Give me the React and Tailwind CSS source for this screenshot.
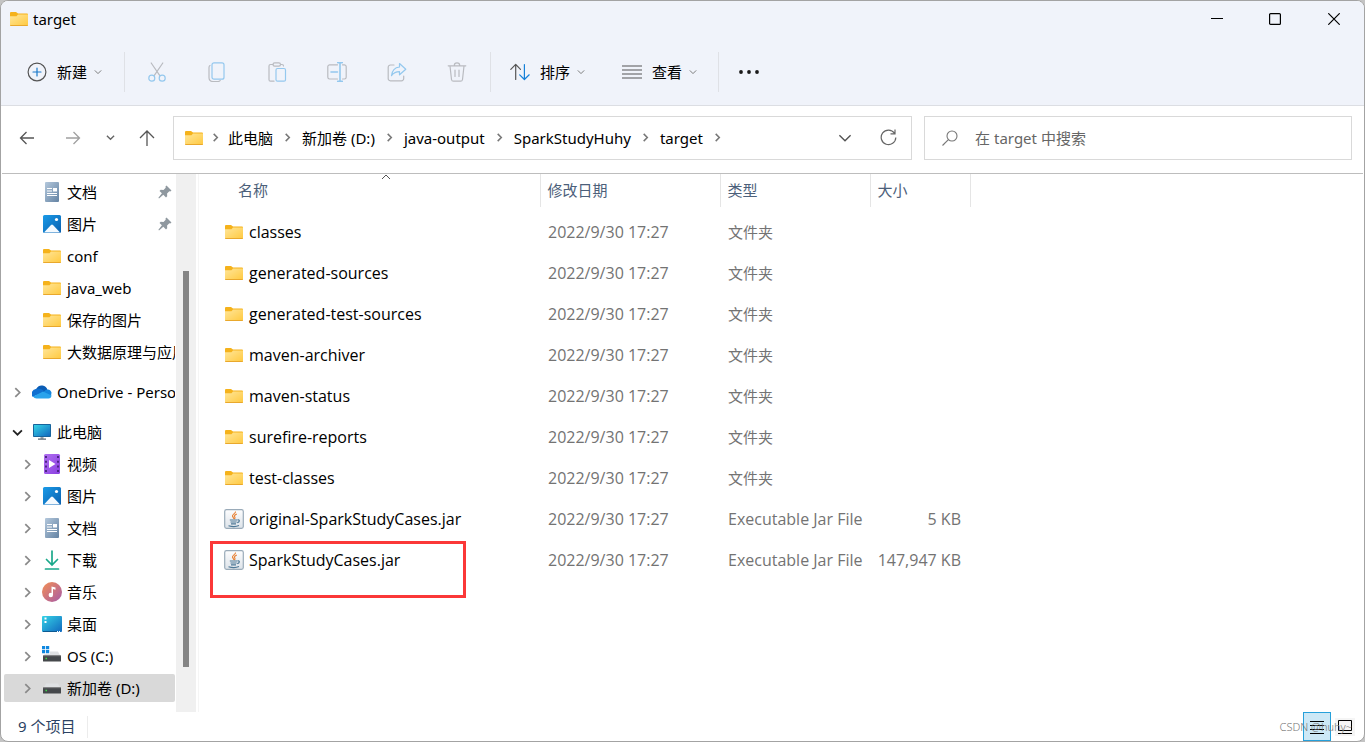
import { useState } from 'react';

const FILES = [
  { name: 'classes', date: '2022/9/30 17:27', type: '文件夹', size: '' },
  { name: 'generated-sources', date: '2022/9/30 17:27', type: '文件夹', size: '' },
  { name: 'generated-test-sources', date: '2022/9/30 17:27', type: '文件夹', size: '' },
  { name: 'maven-archiver', date: '2022/9/30 17:27', type: '文件夹', size: '' },
  { name: 'maven-status', date: '2022/9/30 17:27', type: '文件夹', size: '' },
  { name: 'surefire-reports', date: '2022/9/30 17:27', type: '文件夹', size: '' },
  { name: 'test-classes', date: '2022/9/30 17:27', type: '文件夹', size: '' },
  { name: 'original-SparkStudyCases.jar', date: '2022/9/30 17:27', type: 'Executable Jar File', size: '5 KB', jar: true },
  { name: 'SparkStudyCases.jar', date: '2022/9/30 17:27', type: 'Executable Jar File', size: '147,947 KB', jar: true, marked: true },
];

/* ---------- line icons ---------- */

function Chevron({ dir = 'down', size = 8, className = 'text-[#777]', width = 1.2 }) {
  const d = {
    down: 'M1 3l4 4 4-4',
    up: 'M1 7l4-4 4 4',
    right: 'M3 1l4 4-4 4',
  }[dir];
  return (
    <svg width={size} height={size} viewBox="0 0 10 10" fill="none" stroke="currentColor" strokeWidth={width} className={`shrink-0 ${className}`}>
      <path d={d} />
    </svg>
  );
}

function Icon({ size = 20, children, stroke = '#555' }) {
  return (
    <svg width={size} height={size} viewBox="0 0 20 20" fill="none" stroke={stroke} strokeWidth="1.2" strokeLinecap="round" strokeLinejoin="round" className="shrink-0">
      {children}
    </svg>
  );
}

const GREY = '#b9bbc0';
const BLUE = '#94c8ee';

const NewIcon = () => (
  <Icon>
    <circle cx="10" cy="10" r="8.9" />
    <path d="M10 6v8M6 10h8" stroke="#1979ca" />
  </Icon>
);

const CutIcon = () => (
  <Icon stroke={GREY}>
    <path d="M4.2 1L13 13.8M15.8 1L7 13.8" />
    <circle cx="4.8" cy="16.2" r="3" stroke={BLUE} />
    <circle cx="15.2" cy="16.2" r="3" stroke={BLUE} />
  </Icon>
);

const CopyIcon = () => (
  <Icon stroke={GREY}>
    <path d="M3 3.5c-.9.5-1 1.2-1 2v10c0 2.500 1.400 4 4 4h5c1 0 1.800-.4 2.200-1" />
    <rect x="5" y=".8" width="12" height="16.400" rx="2" stroke={BLUE} />
  </Icon>
);

const PasteIcon = () => (
  <Icon stroke={GREY}>
    <path d="M6 2.500H3.500a1.500 1.500 0 0 0-1.500 1.500v13.700a1.500 1.500 0 0 0 1.500 1.500H7M13.500 2.500H15a1.500 1.500 0 0 1 1.500 1.500" />
    <rect x="6" y=".8" width="7.500" height="3.400" rx="1.600" />
    <rect x="9" y="6.500" width="9.500" height="12.700" rx="1.500" stroke={BLUE} />
  </Icon>
);

const RenameIcon = () => (
  <Icon stroke={GREY}>
    <path d="M10.500 2.800H2.500A1.800 1.800 0 0 0 .8 4.500v10.800a1.800 1.800 0 0 0 1.700 1.700h8M15.500 2.800h2a1.800 1.800 0 0 1 1.700 1.700v10.800a1.800 1.800 0 0 1-1.700 1.700h-2" />
    <path d="M10.700.6h4.600M10.700 19.400h4.600M13 .6v18.800M4 10h6.500" stroke={BLUE} strokeWidth="1.600" />
  </Icon>
);

const ShareIcon = () => (
  <Icon stroke={GREY}>
    <path d="M7 3H3.500a2.200 2.200 0 0 0-2.300 2.200v11.300a2.200 2.200 0 0 0 2.300 2.300h11a2.200 2.200 0 0 0 2.200-2.300V14" />
    <path d="M12.500 1.500l6.300 5.700-6.300 5.600V9.700c-3.500 0-5.800 1-8 4 .5-4.700 3-8.200 8-8.700z" stroke={BLUE} />
  </Icon>
);

const TrashIcon = () => (
  <Icon stroke={GREY}>
    <path d="M1.200 3.800h17.600M7.300 3.500a2.700 2.700 0 0 1 5.400 0M3 4l1.500 13.500a2 2 0 0 0 2 1.700h7a2 2 0 0 0 2-1.700L17 4M8 8v6.500M12 8v6.500" />
  </Icon>
);

const SortIcon = () => (
  <Icon>
    <path d="M5.700 17.500V2.500M.8 7.300l4.900-4.900 4.800 4.900" />
    <path d="M14.400 2.500v15M9.700 12.800l4.700 4.700 4.800-4.700" stroke="#1680d8" />
  </Icon>
);

const ViewIcon = () => (
  <Icon>
    <path d="M.5 4h19M.5 8h19M.5 12h19M.5 16h19" />
  </Icon>
);

const MoreIcon = () => (
  <svg width="20" height="20" viewBox="0 0 20 20" fill="#1a1a1a">
    <circle cx="2" cy="10" r="1.900" />
    <circle cx="10" cy="10" r="1.900" />
    <circle cx="18" cy="10" r="1.900" />
  </svg>
);

const ArrowIcon = ({ dir, stroke }) => (
  <svg width="16" height="16" viewBox="0 0 16 16" fill="none" stroke={stroke} strokeWidth="1.300" className="shrink-0">
    {dir === 'left' && <path d="M15 8H1.500M7.500 2L1.500 8l6 6" />}
    {dir === 'right' && <path d="M1 8h13.500M8.500 2l6 6-6 6" />}
    {dir === 'up' && <path d="M8 16V1M1 8l7-7 7 7" />}
  </svg>
);

/* ---------- coloured icons ---------- */

const FolderIcon = () => (
  <svg width="18" height="16" viewBox="0 0 18 16" className="shrink-0">
    <defs>
      <linearGradient id="folder" x1="0" y1="0" x2="1" y2="1">
        <stop offset="0" stopColor="#ffe69a" />
        <stop offset="1" stopColor="#ffc93f" />
      </linearGradient>
    </defs>
    <path d="M0 2a1 1 0 0 1 1-1h5l2 1.500h9a1 1 0 0 1 1 1V8H0z" fill="#f5b21b" />
    <path d="M0 5.200h6.500L8 3.500h10V14a1 1 0 0 1-1 1H1a1 1 0 0 1-1-1z" fill="url(#folder)" />
    <path d="M0 14h18a1 1 0 0 1-1 1H1a1 1 0 0 1-1-1z" fill="#e9a82c" />
  </svg>
);

const DocIcon = () => (
  <svg width="20" height="20" viewBox="0 0 20 20" className="shrink-0">
    <defs>
      <linearGradient id="doc" x1="0" y1="0" x2="1" y2="1">
        <stop offset="0" stopColor="#b4c8dc" />
        <stop offset="1" stopColor="#6483a3" />
      </linearGradient>
    </defs>
    <rect x="3" width="14" height="20" rx="1" fill="url(#doc)" />
    <path d="M5 6.500h5M5 9h5M5 11.500h10M5 13.500h10" stroke="#fff" />
    <rect x="11" y="6" width="4" height="3.500" fill="#fff" />
  </svg>
);

const PictureIcon = () => (
  <svg width="20" height="20" viewBox="0 0 20 20" className="shrink-0">
    <defs>
      <linearGradient id="pic" x1="0" y1="0" x2="1" y2="1">
        <stop offset="0" stopColor="#1a9be8" />
        <stop offset="1" stopColor="#0a5fae" />
      </linearGradient>
    </defs>
    <rect x="1" y="1" width="18" height="18" rx="1.500" fill="url(#pic)" />
    <path d="M2 18.500l7-7.600a1.400 1.400 0 0 1 2 0l7 7.600z" fill="#f4faff" />
    <circle cx="14.500" cy="5.500" r="1.600" fill="#fff" />
  </svg>
);

const CloudIcon = () => (
  <svg width="20" height="14" viewBox="0 0 20 14" className="shrink-0">
    <path d="M4 10a4 4 0 0 1 .5-6.500A6 6 0 0 1 15.500 5L12 9z" fill="#0a5cb5" />
    <path d="M4.500 4A4.700 4.700 0 0 0 1 12l11-6C9.500 3.500 7 3.300 4.500 4z" fill="#0f6fd0" />
    <path d="M10 8l4-3.200A4.400 4.400 0 0 1 19.500 7.500L19 11z" fill="#1385dd" />
    <path d="M1 11.500L11 6.500l8.500 4A3.300 3.300 0 0 1 16.500 13.500h-12A4.500 4.500 0 0 1 1 11.500z" fill="#29a3ec" />
  </svg>
);

const PcIcon = () => (
  <svg width="20" height="20" viewBox="0 0 20 20" className="shrink-0">
    <defs>
      <linearGradient id="screen" x1="0" y1="0" x2="1" y2="1">
        <stop offset="0" stopColor="#35d3e6" />
        <stop offset="1" stopColor="#1168bf" />
      </linearGradient>
    </defs>
    <rect x="1" y="2" width="18" height="13" rx=".8" fill="#17649c" />
    <rect x="2" y="3" width="16" height="11" fill="url(#screen)" />
    <path d="M8.500 15h3v2h-3z" fill="#9aa4ad" />
    <path d="M6 16.500h8v1.200H6z" fill="#5c6873" />
  </svg>
);

const VideoIcon = () => (
  <svg width="20" height="20" viewBox="0 0 20 20" className="shrink-0">
    <defs>
      <linearGradient id="video" x1="0" y1="0" x2="1" y2="1">
        <stop offset="0" stopColor="#b06ff0" />
        <stop offset="1" stopColor="#8a3fe0" />
      </linearGradient>
    </defs>
    <rect x="2" width="16" height="20" rx="1.500" fill="url(#video)" />
    <path d="M4 2v17M16 2v17" stroke="#43207a" strokeWidth="1.800" strokeDasharray="2 2.700" />
    <path d="M7 6v8l6.500-4z" fill="#fff" />
  </svg>
);

const DownloadIcon = () => (
  <svg width="20" height="20" viewBox="0 0 20 20" fill="none" stroke="#1aa88a" strokeWidth="1.700" strokeLinecap="round" className="shrink-0">
    <path d="M10 1v14M4.500 9.500L10 15l5.500-5.500M3.500 19h13" />
  </svg>
);

const MusicIcon = () => (
  <svg width="20" height="20" viewBox="0 0 20 20" className="shrink-0">
    <defs>
      <linearGradient id="music" x1="0" y1="0" x2="1" y2="1">
        <stop offset=".1" stopColor="#ec8a5c" />
        <stop offset="1" stopColor="#a65aa8" />
      </linearGradient>
    </defs>
    <circle cx="10" cy="10" r="10" fill="url(#music)" />
    <circle cx="8.800" cy="13" r="2.200" fill="#fff" />
    <path d="M9.500 13V4.500l4 1v2.200l-2.500-.6V13z" fill="#fff" />
  </svg>
);

const DesktopIcon = () => (
  <svg width="20" height="20" viewBox="0 0 20 20" className="shrink-0">
    <rect y="2" width="20" height="16" rx="1" fill="url(#screen)" />
    <path d="M2.500 4.500h2M2.500 8h2" stroke="#fff" strokeWidth="2" />
    <path d="M1 17.500h14" stroke="#0d5a92" />
    <path d="M15 17.500h1M17 17.500h1" stroke="#fff" />
  </svg>
);

const DriveIcon = ({ os }) => (
  <svg width="20" height="20" viewBox="0 0 20 20" className="shrink-0">
    <path d="M4 5.500h12l2.500 4.500h-17z" fill="#dfe1e3" />
    <rect x="1" y="9.500" width="18" height="6" rx=".5" fill="#45484b" />
    <path d="M1 9.800h18" stroke="#777" strokeWidth=".8" />
    <path d="M3.500 12.500h1.500" stroke="#3fdc4a" strokeWidth="1.500" />
    {os && (
      <>
        <rect width="8" height="8" fill="#fff" />
        <path d="M0 0h3.200v3.200H0zM4 0h3.200v3.200H4zM0 4h3.200v3.200H0zM4 4h3.200v3.200H4z" fill="#1088e0" />
      </>
    )}
  </svg>
);

const JarIcon = () => (
  <svg width="20" height="20" viewBox="0 0 20 20" fill="none" className="shrink-0">
    <defs>
      <linearGradient id="jar" x1="0" y1="0" x2="0" y2="1">
        <stop offset="0" stopColor="#fdfdfe" />
        <stop offset="1" stopColor="#dde3e9" />
      </linearGradient>
    </defs>
    <rect x=".7" y=".7" width="18.600" height="18.600" rx="1.800" fill="url(#jar)" stroke="#9aabb9" strokeWidth="1.200" />
    <path d="M11.500 2.500c.5 2-3.800 2.800-3 4.800.3.900 1.500 1.400 1.200 2.700M12.800 5c-2 .9-3 1.700-2 3 .5.700.3 1.300-.4 2" stroke="#e8853b" strokeWidth="1.200" />
    <path d="M5.800 11h7.400M6.500 13h6.200M7 14.900h5M4.500 16.800c3 .9 8 .9 10.500-.2M13.500 11c2.500-.8 2.500 2.200-.3 2.600" stroke="#4d7896" strokeWidth="1.100" />
  </svg>
);

const PinIcon = () => (
  <svg width="14" height="14" viewBox="0 0 14 14" className="shrink-0">
    <path d="M8.500.5l5 5-1.200.9-1-.1-2.200 2.200.1 2.700-1.200 1.200-2.700-2.700L1 13.400l-.6-.6 3.500-4.500L1.500 6l1.200-1.200 2.800.1 2.200-2.200-.2-1.200z" fill="#8f989f" />
  </svg>
);

/* ---------- sidebar ---------- */

const QUICK = [
  { label: '文档', icon: DocIcon, pinned: true },
  { label: '图片', icon: PictureIcon, pinned: true },
  { label: 'conf', icon: FolderIcon },
  { label: 'java_web', icon: FolderIcon },
  { label: '保存的图片', icon: FolderIcon },
  { label: '大数据原理与应用', icon: FolderIcon },
];

const PC_ITEMS = [
  { label: '视频', icon: VideoIcon },
  { label: '图片', icon: PictureIcon },
  { label: '文档', icon: DocIcon },
  { label: '下载', icon: DownloadIcon },
  { label: '音乐', icon: MusicIcon },
  { label: '桌面', icon: DesktopIcon },
  { label: 'OS (C:)', icon: () => <DriveIcon os /> },
  { label: '新加卷 (D:)', icon: DriveIcon, active: true },
];

function TreeItem({ label, icon: ItemIcon, pinned, active, level = 1, expand }) {
  return (
    <li>
      <a href="#" className={`flex h-7 items-center overflow-hidden rounded-xs ${level ? 'pl-[18px]' : 'pl-2'} ${active ? 'bg-[#d9d9d9]' : ''}`}>
        <span className="flex w-5 shrink-0 items-center">
          {expand && (
            <Chevron dir={expand} size={11} width={1.6} className={expand === 'down' ? 'text-[#222]' : 'text-[#8a8a8a]'} />
          )}
        </span>
        <span className="flex w-5 shrink-0 justify-center">
          <ItemIcon />
        </span>
        <span className="ml-[5px] grow whitespace-nowrap">{label}</span>
        {pinned && (
          <span className="pr-[3px]">
            <PinIcon />
          </span>
        )}
      </a>
    </li>
  );
}

function Sidebar() {
  return (
    <nav className="flex w-[195px] shrink-0">
      <div className="flex w-[175px] flex-col gap-3 overflow-hidden pt-1 pr-px pl-[3px] text-black">
        <ul className="flex flex-col gap-1">
          {QUICK.map((item) => (
            <TreeItem key={item.label} {...item} />
          ))}
        </ul>
        <ul>
          <TreeItem label="OneDrive - Personal" icon={CloudIcon} level={0} expand="right" />
        </ul>
        <ul className="flex flex-col gap-1">
          <TreeItem label="此电脑" icon={PcIcon} level={0} expand="down" />
          {PC_ITEMS.map((item) => (
            <TreeItem key={item.label} {...item} expand="right" />
          ))}
        </ul>
      </div>
      {/* scrollbar */}
      <div className="flex w-5 flex-col items-center bg-[#f0f0f0]">
        <div className="grow-[97]" />
        <div className="w-1.5 grow-[396] bg-[#858585]" />
        <div className="grow-[45]" />
      </div>
    </nav>
  );
}

/* ---------- top bars ---------- */

function TitleBar() {
  return (
    <div className="flex h-[38px] items-center pb-0.5">
      <div className="flex grow items-center gap-[5px] pl-[9px] text-black">
        <FolderIcon />
        <h1>target</h1>
      </div>
      <button aria-label="最小化" className="flex h-full w-[58px] items-center justify-center">
        <svg width="12" height="12" viewBox="0 0 12 12" stroke="#000"><path d="M0 5.500h12" /></svg>
      </button>
      <button aria-label="最大化" className="flex h-full w-[58px] items-center justify-center">
        <svg width="12" height="12" viewBox="0 0 12 12" fill="none" stroke="#000" strokeWidth="1.200"><rect x=".6" y=".6" width="10.800" height="10.800" rx="1" /></svg>
      </button>
      <button aria-label="关闭" className="flex h-full w-[60px] items-center justify-center">
        <svg width="12" height="12" viewBox="0 0 12 12" stroke="#000" strokeWidth="1.200"><path d="M.3.3l11.400 11.400M11.700.3L.3 11.700" /></svg>
      </button>
    </div>
  );
}

const Divider = () => <span className="h-10 w-px bg-[#dfe1e6]" />;

const TOOLS = [
  { label: '剪切', icon: CutIcon },
  { label: '复制', icon: CopyIcon },
  { label: '粘贴', icon: PasteIcon },
  { label: '重命名', icon: RenameIcon },
  { label: '共享', icon: ShareIcon },
  { label: '删除', icon: TrashIcon },
];

function MenuButton({ icon: ButtonIcon, label }) {
  return (
    <button className="flex items-center text-black">
      <ButtonIcon />
      <span className="ml-2.5">{label}</span>
      <span className="ml-[7px]">
        <Chevron />
      </span>
    </button>
  );
}

function Toolbar() {
  return (
    <div className="flex h-[67px] items-center border-b border-[#dcdee3] pl-[26px]">
      <div className="mr-[22px]">
        <MenuButton icon={NewIcon} label="新建" />
      </div>
      <Divider />
      <div className="mr-[3px] ml-0.5 flex">
        {TOOLS.map(({ label, icon: ToolIcon }) => (
          <button key={label} aria-label={label} disabled className="flex w-15 justify-center">
            <ToolIcon />
          </button>
        ))}
      </div>
      <Divider />
      <div className="mr-[21px] ml-[19px] flex gap-[37px]">
        <MenuButton icon={SortIcon} label="排序" />
        <MenuButton icon={ViewIcon} label="查看" />
      </div>
      <Divider />
      <button aria-label="更多" className="ml-5">
        <MoreIcon />
      </button>
    </div>
  );
}

const PATH = ['此电脑', '新加卷 (D:)', 'java-output', 'SparkStudyHuhy', 'target'];

function AddressBar() {
  const [query, setQuery] = useState('');
  return (
    <div className="mx-px flex h-[68px] items-center border-b border-[#bdbdbd] pr-[11px] pb-1 pl-[17px]">
      <div className="flex w-[154px] shrink-0 items-center">
        <button aria-label="后退" className="mr-[30px]"><ArrowIcon dir="left" stroke="#555" /></button>
        <button aria-label="前进" className="mr-[25px]"><ArrowIcon dir="right" stroke="#a0a0a0" /></button>
        <button aria-label="最近" className="mr-6"><Chevron size={9} width={1.5} className="text-[#666]" /></button>
        <button aria-label="向上"><ArrowIcon dir="up" stroke="#555" /></button>
      </div>
      <div className="flex h-11 min-w-0 grow items-center border border-[#d9d9d9] pl-[11px]">
        <FolderIcon />
        <span className="mx-2 flex"><Chevron dir="right" width={1.7} size={9} /></span>
        <ol className="flex grow items-center text-black">
          {PATH.map((part) => (
            <li key={part} className="flex items-center">
              <a href="#" className="whitespace-nowrap">{part}</a>
              <span className="mx-2.5"><Chevron dir="right" width={1.7} size={9} /></span>
            </li>
          ))}
        </ol>
        <button aria-label="历史记录" className="mr-7"><Chevron size={14} width={1} className="text-[#555]" /></button>
        <button aria-label="刷新" className="mr-3.5">
          <svg width="17" height="17" viewBox="0 0 17 17" fill="none" stroke="#666" strokeWidth="1.200">
            <path d="M14.500 4.200A7.300 7.300 0 1 0 15.800 8.500M15 .5v4.300h-4.500" />
          </svg>
        </button>
      </div>
      <div className="ml-3 flex h-11 w-[32.1%] shrink-0 items-center border border-[#d9d9d9] pl-[17px]">
        <svg width="16" height="16" viewBox="0 0 16 16" fill="none" stroke="#777" strokeWidth="1.100" className="shrink-0">
          <circle cx="10" cy="6" r="5" />
          <path d="M6.400 9.600L.5 15.500" />
        </svg>
        <input
          type="text"
          aria-label="搜索"
          placeholder="在 target 中搜索"
          value={query}
          onChange={(e) => setQuery(e.target.value)}
          className="ml-[17px] w-full bg-transparent outline-none placeholder:text-[#666]"
        />
      </div>
    </div>
  );
}

/* ---------- file list ---------- */

function FileTable() {
  return (
    <main className="ml-0.5 grow border-l border-[#f5f5f5]">
      <table className="w-[771px] table-fixed">
        <colgroup>
          <col className="w-[341px]" />
          <col className="w-[180px]" />
          <col className="w-[150px]" />
          <col className="w-[100px]" />
        </colgroup>
        <thead>
          <tr className="h-[33px] text-left text-[#4c607a] [&>th]:border-r [&>th]:border-[#e5e5e5] [&>th]:pb-0.5 [&>th]:font-normal">
            <th className="relative pl-[39px]">
              名称
              <span className="absolute -top-0.5 left-[182px]"><Chevron dir="up" size={10} width={1} className="text-[#555]" /></span>
            </th>
            <th className="pl-[7px]">修改日期</th>
            <th className="pl-[7px]">类型</th>
            <th className="pl-[7px]">大小</th>
          </tr>
        </thead>
        <tbody className="font-['Open_Sans','Noto_Sans_CJK_SC',sans-serif] text-base leading-5 before:block before:h-[5px]">
          {FILES.map((file) => (
            <tr key={file.name} className="h-[41px] text-[#737373] [&>td]:pb-0.5">
              <td className="relative pl-[25px]">
                <a href="#" className="flex items-center gap-[5px] text-black">
                  <span className="flex w-5 justify-center">{file.jar ? <JarIcon /> : <FolderIcon />}</span>
                  {file.name}
                </a>
                {file.marked && <span className="absolute top-px left-[11px] h-[57px] w-64 border-3 border-[#fb3838]" />}
              </td>
              <td className="pl-2">{file.date}</td>
              <td className={`pl-2 whitespace-nowrap ${file.jar ? '' : 'text-[15px]'}`}>{file.type}</td>
              <td className="pr-[9px] text-right whitespace-nowrap">{file.size}</td>
            </tr>
          ))}
        </tbody>
      </table>
    </main>
  );
}

function StatusBar() {
  return (
    <footer className="relative flex h-[29px] items-center pl-[17px] text-[#2b4263]">
      <span className="border-r border-[#ececec] pr-3 pb-0.5">9 个项目</span>
      <div className="ml-auto flex h-full items-center gap-1 pr-[9px]">
        <button aria-label="详细信息" className="flex h-[29px] w-7 items-center justify-center border border-[#26a0da] bg-[#cce8f6]">
          <svg width="14" height="14" viewBox="0 0 14 14" stroke="#000"><path d="M0 1.500h14M0 5.500h14M0 9.500h14M0 13.500h14" /></svg>
        </button>
        <button aria-label="大图标" className="flex w-5 justify-center bg-[#f5f5f5] py-0.5">
          <svg width="14" height="14" viewBox="0 0 14 14" fill="none" stroke="#000"><path d="M.5.500h13v10H.500zM0 13.500h14" /></svg>
        </button>
      </div>
      <span className="absolute right-3 bottom-1 text-[11px] font-light text-[#777]">CSDN @huhy~</span>
    </footer>
  );
}

export default function App() {
  return (
    <div className="flex min-h-screen bg-[#c4c4c4] font-['Noto_Sans','Noto_Sans_CJK_SC',sans-serif] text-[15px] leading-5">
      <div className="flex grow flex-col overflow-hidden rounded-lg border border-[#a3a3a3] bg-white">
        <header className="bg-[#f0f3fa]">
          <TitleBar />
          <Toolbar />
        </header>
        <AddressBar />
        <div className="flex grow">
          <Sidebar />
          <FileTable />
        </div>
        <StatusBar />
      </div>
    </div>
  );
}
